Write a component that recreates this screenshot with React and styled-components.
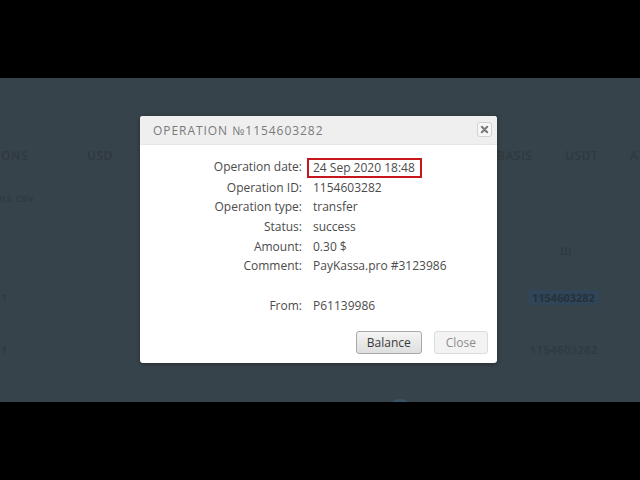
import React from 'react';
import styled, { createGlobalStyle } from 'styled-components';

const GlobalStyle = createGlobalStyle`
  html, body {
    margin: 0;
    padding: 0;
    background: #000;
  }
  body {
    font-family: 'Open Sans', 'Liberation Sans', sans-serif;
  }
`;

const rows = [
  { label: 'Operation date:', value: '24 Sep 2020 18:48', marked: true },
  { label: 'Operation ID:', value: '1154603282' },
  { label: 'Operation type:', value: 'transfer' },
  { label: 'Status:', value: 'success' },
  { label: 'Amount:', value: '0.30 $' },
  { label: 'Comment:', value: 'PayKassa.pro #3123986' },
  { label: '', value: '' },
  { label: 'From:', value: 'P61139986' },
];

function App() {
  return (
    <Frame>
      <GlobalStyle />
      <Letterbox />
      <Screen>
        <BgGrid>
          <BgRow $top={66}>
            <BgText>OPERATIONS</BgText>
            <BgText>USD</BgText>
            <BgText $shift={-8}>BASIS</BgText>
            <span />
            <BgText>USDT</BgText>
            <BgText>AT</BgText>
          </BgRow>
          <BgRow $top={20}>
            <BgText $small>Operations csv</BgText>
          </BgRow>
          <BgRow $top={31}>
            <span />
            <span />
            <span />
            <span />
            <BgText $small $shift={-5}>Ш</BgText>
          </BgRow>
          <BgRow $top={25}>
            <BgText $small $shift={53}>1</BgText>
            <span />
            <span />
            <BgBadge>1154603282</BgBadge>
          </BgRow>
          <BgRow $top={30}>
            <BgText $small $shift={53}>1</BgText>
            <span />
            <span />
            <BgText $small $shift={2}>1154603282</BgText>
          </BgRow>
          <BgRow $top={29}>
            <span />
            <BgCircle $shift={299} />
          </BgRow>
        </BgGrid>

        <Overlay>
          <Modal>
            <Header>
              <Title>Operation №1154603282</Title>
              <CloseX type="button" aria-label="close">
                <svg width="9" height="9" viewBox="0 0 9 9">
                  <path
                    d="M1.8 1.8 L7.2 7.2 M7.2 1.8 L1.8 7.2"
                    stroke="#7a7a7a"
                    strokeWidth="2.1"
                    strokeLinecap="round"
                  />
                </svg>
              </CloseX>
            </Header>
            <Body>
              {rows.map((r, i) => (
                <React.Fragment key={i}>
                  <Label>{r.label || '\u00a0'}</Label>
                  <Value>
                    {r.marked ? <Marked>{r.value}</Marked> : r.value || '\u00a0'}
                  </Value>
                </React.Fragment>
              ))}
            </Body>
            <Footer>
              <Button type="button">Balance</Button>
              <Button type="button" $muted>
                Close
              </Button>
            </Footer>
          </Modal>
        </Overlay>
      </Screen>
      <Letterbox />
    </Frame>
  );
}

const Frame = styled.div`
  width: 640px;
  height: 480px;
  display: flex;
  flex-direction: column;
  background: #000;
  overflow: hidden;
`;

const Letterbox = styled.div`
  height: 78px;
  flex: none;
  background: #000;
`;

const Screen = styled.div`
  position: relative;
  height: 324px;
  flex: none;
  background: #37434a;
  overflow: hidden;
`;

const BgGrid = styled.div`
  display: flex;
  flex-direction: column;
  margin-left: -52px;
`;

const BgRow = styled.div`
  display: grid;
  grid-template-columns: 139px 418px 23px 37px 65px 60px;
  height: 22px;
  margin-top: ${({ $top }) => $top}px;
  align-items: center;
`;

const BgText = styled.span`
  font-family: 'Open Sans', sans-serif;
  font-size: ${({ $small }) => ($small ? '11px' : '12px')};
  font-weight: 600;
  letter-spacing: 0.5px;
  color: #2f393f;
  white-space: nowrap;
  margin-left: ${({ $shift }) => $shift || 0}px;
`;

const BgBadge = styled.span`
  justify-self: start;
  background: #304558;
  color: #25313b;
  font-size: 11px;
  font-weight: 700;
  padding: 0 4px;
  line-height: 15px;
  white-space: nowrap;
`;

const BgCircle = styled.span`
  width: 28px;
  height: 28px;
  border-radius: 50%;
  background: #3a5465;
  margin-top: 10px;
  margin-left: ${({ $shift }) => $shift || 0}px;
`;

const Overlay = styled.div`
  position: absolute;
  inset: 0;
  display: flex;
  align-items: center;
  justify-content: center;
  padding-right: 3px;
`;

const Modal = styled.div`
  width: 357px;
  background: #fff;
  border-radius: 3px;
  box-shadow: 0 1px 4px rgba(0, 0, 0, 0.35);
  overflow: hidden;
  margin-top: -1px;
`;

const Header = styled.div`
  height: 29px;
  display: flex;
  align-items: center;
  justify-content: space-between;
  padding: 0 5px 0 13px;
  background: #efefef;
  border-bottom: 1px solid #e6e6e6;
  box-sizing: border-box;
`;

const Title = styled.h3`
  margin: 0;
  font-size: 12px;
  font-weight: 400;
  text-transform: uppercase;
  letter-spacing: 0.95px;
  color: #7a7a7a;
  padding-top: 1px;
`;

const CloseX = styled.button`
  width: 15px;
  height: 15px;
  padding: 0;
  display: flex;
  align-items: center;
  justify-content: center;
  background: #f7f7f7;
  border: 1px solid #d2d2d2;
  border-radius: 3px;
  cursor: pointer;
`;

const Body = styled.div`
  display: grid;
  grid-template-columns: 162px 1fr;
  column-gap: 11px;
  padding-top: 12px;
  font-size: 12px;
  line-height: 19.7px;
  color: #4b4b4b;
`;

const Label = styled.div`
  text-align: right;
  white-space: nowrap;
`;

const Value = styled.div`
  white-space: nowrap;
`;

const Marked = styled.span`
  display: inline-block;
  line-height: 16px;
  padding: 0 5px 0 4px;
  margin-left: -6px;
  margin-top: 1px;
  border: 2px solid #c8161d;
  vertical-align: top;
`;

const Footer = styled.div`
  display: flex;
  justify-content: flex-end;
  gap: 12px;
  padding: 16px 9px 9px;
`;

const Button = styled.button`
  height: 23px;
  padding: 0 ${({ $muted }) => ($muted ? '11px' : '10px')};
  font-family: 'Open Sans', 'Liberation Sans', sans-serif;
  font-size: 12px;
  color: ${({ $muted }) => ($muted ? '#8d8d8d' : '#3a3a3a')};
  border: 1px solid ${({ $muted }) => ($muted ? '#dcdcdc' : '#a9a9a9')};
  border-radius: 3px;
  background: ${({ $muted }) =>
    $muted ? '#f3f3f3' : 'linear-gradient(#f4f4f4, #dedede)'};
  cursor: pointer;
`;

export default App;
